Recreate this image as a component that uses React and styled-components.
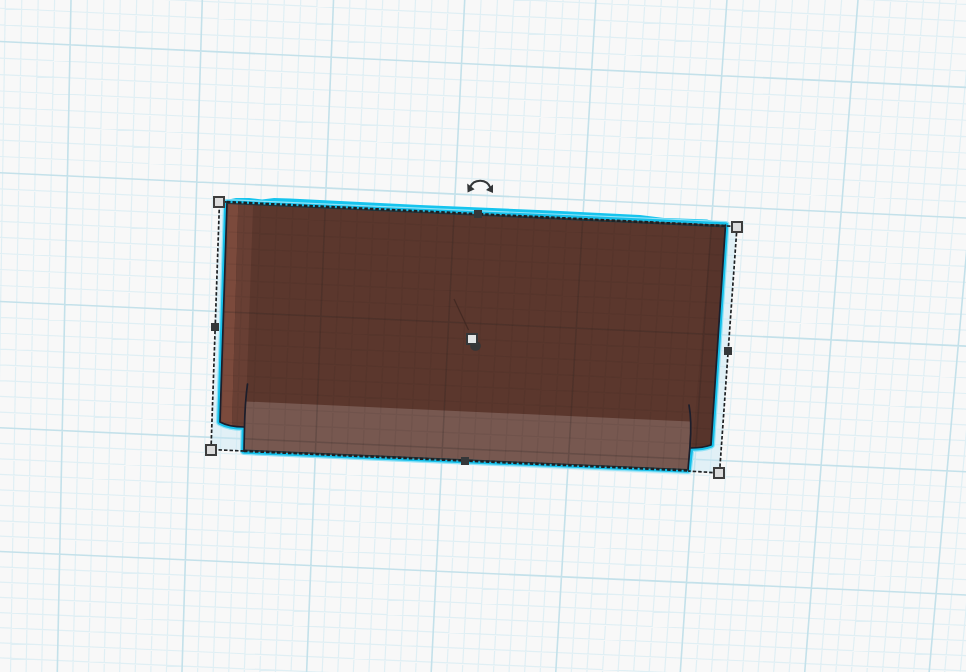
import React from 'react';
import styled, { createGlobalStyle } from 'styled-components';

const GlobalStyle = createGlobalStyle`
  body {
    margin: 0;
    background: #f8f8f8;
    overflow: hidden;
  }
`;

const Stage = styled.main`
  position: relative;
  width: 100%;
  aspect-ratio: 966 / 672;
  overflow: hidden;
  background: #f8f8f8;
`;

const Scene = styled.svg`
  display: block;
  width: 100%;
  height: 100%;
`;

const GridPath = styled.path`
  fill: none;
  stroke: ${props => props.$color};
  stroke-width: ${props => props.$width || 1};
`;

const Edge = styled.path`
  fill: none;
  stroke: #1c1e2b;
  stroke-width: 1.7;
  stroke-linecap: round;
  stroke-linejoin: round;
`;

const Handle = styled.button`
  position: absolute;
  left: ${props => (props.$x / 966) * 100}%;
  top: ${props => (props.$y / 672) * 100}%;
  transform: translate(-50%, -50%);
  box-sizing: border-box;
  padding: 0;
  cursor: pointer;
`;

const CornerHandle = styled(Handle)`
  width: 12px;
  height: 12px;
  background: #dcdcdc;
  border: 2px solid #3d3d3d;
`;

const SideHandle = styled(Handle)`
  width: 8px;
  height: 8px;
  background: #353739;
  border: none;
`;

const LiftHandle = styled(Handle)`
  width: 12px;
  height: 12px;
  background: #e2e4e4;
  border: 2px solid #353739;
`;

const RotateHandle = styled(Handle)`
  width: 28px;
  height: 16px;
  background: none;
  border: none;

  svg {
    display: block;
  }
`;

// Perspective of the workplane: the screen corners of a 48 x 32 cell area
const plane = [[70.1, 44.8], [851.5, 81.9], [811.4, 588], [59.7, 554.2]];

const makeProjection = ([[x0, y0], [x1, y1], [x2, y2], [x3, y3]]) => {
  const dx1 = x1 - x2;
  const dx2 = x3 - x2;
  const dx3 = x0 - x1 + x2 - x3;
  const dy1 = y1 - y2;
  const dy2 = y3 - y2;
  const dy3 = y0 - y1 + y2 - y3;
  const det = dx1 * dy2 - dx2 * dy1;
  const g = (dx3 * dy2 - dx2 * dy3) / det;
  const h = (dx1 * dy3 - dx3 * dy1) / det;

  return (col, row) => {
    const u = col / 48;
    const v = row / 32;
    const w = g * u + h * v + 1;
    return [
      ((x1 - x0 + g * x1) * u + (x3 - x0 + h * x3) * v + x0) / w,
      ((y1 - y0 + g * y1) * u + (y3 - y0 + h * y3) * v + y0) / w,
    ].map(n => n.toFixed(2)).join(' ');
  };
};

const project = makeProjection(plane);

const gridLines = major => {
  const lines = [];
  for (let i = -8; i <= 64; i++) {
    if ((i % 8 === 0) === major) {
      lines.push(`M${project(i, -10)}L${project(i, 46)}`);
      lines.push(`M${project(-10, i)}L${project(66, i)}`);
    }
  }
  return lines.join('');
};

const minorGrid = gridLines(false);
const majorGrid = gridLines(true);

const silhouette =
  'M227 203L725.5 225L711 445Q703 448 690.5 448L688 470L244 451L244.5 427Q229 427 220 422Z';

const corners = [
  { name: 'Back left corner', x: 219, y: 202 },
  { name: 'Back right corner', x: 737, y: 227 },
  { name: 'Front right corner', x: 719, y: 473 },
  { name: 'Front left corner', x: 211, y: 450 },
];

const sides = [
  { name: 'Depth, back', x: 478, y: 214 },
  { name: 'Width, right', x: 728, y: 351 },
  { name: 'Depth, front', x: 465, y: 461 },
  { name: 'Width, left', x: 215, y: 327 },
];

const Workplane = () => (
  <>
    <GridPath d={minorGrid} $color="#e0eff4" $width={1.2} />
    <GridPath d={majorGrid} $color="#c4e1ea" $width={1.6} />
  </>
);

const Model = () => (
  <>
    <defs>
      <clipPath id="body">
        <path d={silhouette} />
      </clipPath>
    </defs>

    {/* selection footprint and glow */}
    <path d="M219.5 201.5L737 226.5L719.5 473L211 449.5Z" fill="#c6e6f5" fillOpacity="0.45" />
    <path
      d="M226 200L236 198L249 198L262 199.5L274 198L290 198.5L420 205L550 210.5L640 215L664 218L694 219L707 219.5L712 221L728 222.5L727 227L226 204Z"
      fill="#16c4ee"
    />
    <path d={silhouette} fill="none" stroke="#8fe2f7" strokeWidth="8" strokeLinejoin="round" />
    <path d={silhouette} fill="none" stroke="#16bfe9" strokeWidth="5.6" strokeLinejoin="round" />

    <path d={silhouette} fill="#5b372d" />
    <g clipPath="url(#body)">
      <path d="M220 195H238.5L231.7 435H215Z" fill="#7b4a3c" />
      <path d="M238.5 195H253.5L245 435H231.7Z" fill="#683f34" />
      <path d="M712 220L730 220L716 452H692Z" fill="#57342b" />
      <path d="M246 401.5L690.5 421.5L688 472L243 453Z" fill="#775850" />
      <GridPath d={minorGrid} $color="rgba(30, 28, 28, 0.07)" $width={1.2} />
      <GridPath d={majorGrid} $color="rgba(30, 28, 28, 0.2)" $width={1.5} />
    </g>

    <Edge d="M227 203L220 422Q229 427 244 427" />
    <Edge d="M725.5 225L711 445Q703 448 691 448" />
    <Edge d="M247.5 384Q245 402 244.5 427L244 451" />
    <Edge d="M689 405Q692 421 690 446L688 470" />

    <path d="M454 299L468.5 330" stroke="#442a23" strokeWidth="1.2" />
    <ellipse cx="475.5" cy="346" rx="5.3" ry="4.8" fill="#353536" />
  </>
);

const BoundingBox = () => (
  <g fill="none" stroke="#1d2023">
    <path d="M227 203.5L726 227M244 450L688 469.5" stroke="#1f3a42" />
    <path d="M227 202L727 226M244 451L688 470.5" strokeWidth="2.4" strokeDasharray="3.5 2" />
    <path
      d="M219.5 201.5L227 202M727 226L737 226.5L719.5 473L688 471M244 451L211 449.5L219.5 201.5"
      strokeWidth="1.7"
      strokeDasharray="3.5 2"
    />
  </g>
);

const App = () => {
  return (
    <>
      <GlobalStyle />
      <Stage>
        <Scene viewBox="0 0 966 672" aria-hidden="true">
          <Workplane />
          <Model />
          <BoundingBox />
        </Scene>

        {sides.map(side => (
          <SideHandle key={side.name} type="button" aria-label={side.name} $x={side.x} $y={side.y} />
        ))}
        {corners.map(corner => (
          <CornerHandle key={corner.name} type="button" aria-label={corner.name} $x={corner.x} $y={corner.y} />
        ))}
        <LiftHandle type="button" aria-label="Height" $x={472} $y={339} />
        <RotateHandle type="button" aria-label="Rotate" $x={480} $y={186}>
          <svg width="28" height="16" viewBox="0 0 28 16">
            <path d="M4 9.5C7.5 0.6 21 0.4 24.5 10" fill="none" stroke="#343638" strokeWidth="2" />
            <path d="M1.2 5.5L8.6 11.3L1.6 14.4Z" fill="#343638" />
            <path d="M27 6.5L20 12L27 15Z" fill="#343638" />
          </svg>
        </RotateHandle>
      </Stage>
    </>
  );
};

export default App;
